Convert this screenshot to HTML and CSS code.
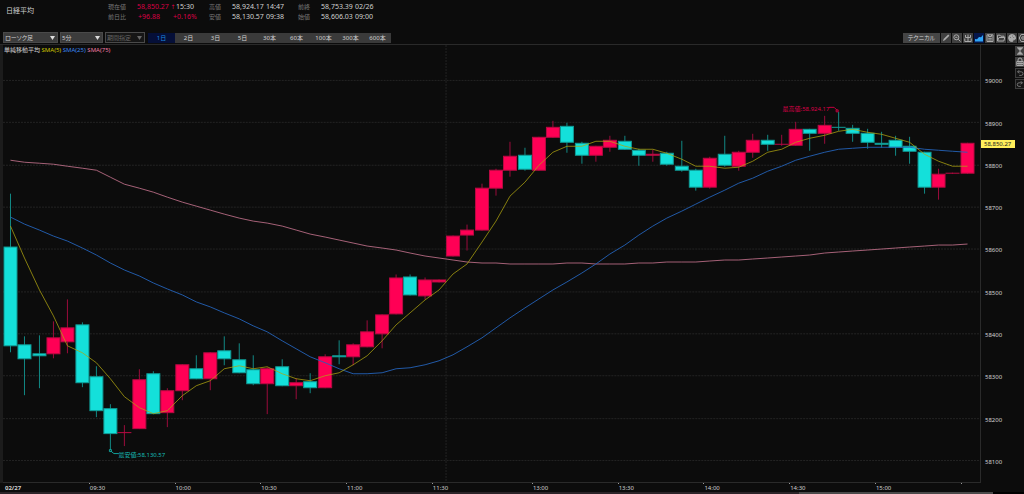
FILE: index.html
```html
<!DOCTYPE html>
<html lang="ja">
<head>
<meta charset="UTF-8">
<meta name="viewport" content="width=device-width, initial-scale=1.0">
<title>日経平均</title>
<link rel="stylesheet" href="styles.css">
</head>
<body>
<header class="quote">
  <h1 class="name">日経平均</h1>
  <dl class="figures">
    <div class="pair current">
      <dt>現在値</dt><dd class="up">58,850.27 <span class="arrow">↑</span></dd><dd>15:30</dd>
      <dt>前日比</dt><dd class="up change">+96.88</dd><dd class="up">+0.16%</dd>
    </div>
    <div class="pair">
      <dt>高値</dt><dd>58,924.17</dd><dd>14:47</dd>
      <dt>安値</dt><dd>58,130.57</dd><dd>09:38</dd>
    </div>
    <div class="pair">
      <dt>前終</dt><dd>58,753.39</dd><dd>02/26</dd>
      <dt>始値</dt><dd>58,606.03</dd><dd>09:00</dd>
    </div>
  </dl>
</header>

<nav class="toolbar">
  <span class="select type"><select aria-label="チャート種類"><option>ローソク足</option></select></span>
  <span class="select span"><select aria-label="足"><option>5分</option></select></span>
  <span class="select range"><select aria-label="期間" disabled><option>期間指定</option></select></span>
  <div class="periods">
    <button class="active">1日</button>
    <button>2日</button>
    <button>3日</button>
    <button>5日</button>
    <button>30本</button>
    <button>60本</button>
    <button>100本</button>
    <button>300本</button>
    <button>600本</button>
  </div>
  <div class="tools">
    <button class="technical">テクニカル</button>
    <button class="icon" aria-label="描画"><svg viewBox="0 0 10 10"><path d="M2 8l.6-1.900 4.600-4.600 1.200 1.200-4.600 4.600z" fill="#aaa" stroke="none"/></svg></button>
    <button class="icon" aria-label="拡大"><svg viewBox="0 0 10 10"><circle cx="4.300" cy="4.300" r="2.500"/><path d="M6.200 6.200L8.500 8.500M3.200 4.300h2.200"/></svg></button>
    <button class="icon" aria-label="比較"><svg viewBox="0 0 10 10"><path d="M5 1.500v7M2.500 2v2.500h5V2M1.800 5.500v3h6.400v-3"/></svg></button>
    <button class="icon active" aria-label="出来高"><svg viewBox="0 0 10 10"><path d="M1 8.500V6l2 .2L5 4l2 .3L9 2v6.500z" fill="#2fa4f5" stroke="none"/></svg></button>
    <button class="icon" aria-label="保存"><svg viewBox="0 0 10 10"><path d="M2 1.800h6v6.700H2zM3.500 1.800v1.700h3V1.800M3.200 5.300h3.600M3.200 7h3.600"/></svg></button>
    <button class="icon" aria-label="開く"><svg viewBox="0 0 10 10"><path d="M1.500 8V2.200h2.500l.8 1h3.200v1.300M1.500 8l1.500-3.500h5.800L7.800 8z"/></svg></button>
    <button class="icon" aria-label="配色"><svg viewBox="0 0 10 10"><path d="M5 1.500a3.500 3.500 0 1 0 .3 7c1 0 .2-1.200.9-1.600.8-.4 2.300.2 2.300-1.900A3.500 3.500 0 0 0 5 1.500z" fill="#aaa"/><path d="M3 4.500h.6M5 3h.6M6.500 4.500h.6" stroke="#555"/></svg></button>
    <button class="icon" aria-label="設定"><svg viewBox="0 0 10 10"><path d="M3.200 1.500h3.600l2 3.500-2 3.500H3.200L1.200 5z"/><circle cx="5" cy="5" r="1.300"/></svg></button>
  </div>
</nav>

<main class="chart">
  <div class="plot">
    <svg id="plot" viewBox="3 45 978 438" preserveAspectRatio="none" role="img" aria-label="5分足チャート">
      <g id="grid" class="grid"></g>
      <g id="candles"></g>
      <polyline id="sma75" class="line sma75"/>
      <polyline id="sma25" class="line sma25"/>
      <polyline id="sma5" class="line sma5"/>
      <path class="leader high" d="M830 107.500h5l3 3M837 110h2v2h-2z"/>
      <path class="leader low" d="M109.500 450.500h2v2h-2zM111 452l3 2.500h5"/>
    </svg>
    <p class="legend">単純移動平均 <span class="sma5">SMA(5)</span> <span class="sma25">SMA(25)</span> <span class="sma75">SMA(75)</span></p>
    <span class="mark high">最高値:58,924.17</span>
    <span class="mark low">最安値:58,130.57</span>
  </div>
  <div class="prices">
    <span></span>
    <span>59000</span>
    <span>58900</span>
    <span>58800</span>
    <span>58700</span>
    <span>58600</span>
    <span>58500</span>
    <span>58400</span>
    <span>58300</span>
    <span>58200</span>
    <span>58100</span>
    <b class="last">58,850.27</b>
  </div>
  <div class="side">
    <button class="icon" aria-label="縦幅"><svg viewBox="0 0 10 10"><path d="M2 1.800h6M2 8.200h6"/><path d="M3.200 2.500h3.600L5 4.600zM3.200 7.500h3.600L5 5.400z" fill="#aaa"/></svg></button>
    <button class="icon" aria-label="固定"><svg viewBox="0 0 10 10"><path d="M3 4.500V3a2 2 0 0 1 4 0v1.500"/><path d="M1.800 4.500h6.400v4H1.800zM4 4.500v4M6 4.500v4M1.800 6.500h6.400"/></svg></button>
    <button class="icon off" aria-label="元に戻す"><svg viewBox="0 0 10 10"><path d="M4 1.500L2 3.500l2 2M2 3.500h4.500a2 2 0 0 1 0 4.500H4"/></svg></button>
    <button class="icon off" aria-label="やり直す"><svg viewBox="0 0 10 10"><path d="M6 1.500l2 2-2 2M8 3.500H3.800a2 2 0 0 0 0 4.500H6"/></svg></button>
  </div>
  <div class="times">
    <b style="grid-column-start: 1">02/27</b>
    <span style="grid-column-start: 7">09:30</span>
    <span style="grid-column-start: 13">10:00</span>
    <span style="grid-column-start: 19">10:30</span>
    <span style="grid-column-start: 25">11:00</span>
    <span style="grid-column-start: 31">11:30</span>
    <span style="grid-column-start: 38">13:00</span>
    <span style="grid-column-start: 44">13:30</span>
    <span style="grid-column-start: 50">14:00</span>
    <span style="grid-column-start: 56">14:30</span>
    <span style="grid-column-start: 62">15:00</span>
    <span style="grid-column-start: 68"></span>
  </div>
</main>
<div class="scrollbar"></div>
<script src="chart.js"></script>
</body>
</html>
```
FILE: styles.css
```css
* {
  box-sizing: border-box;
}
body {
  margin: 0;
  height: 100vh;
  display: flex;
  flex-direction: column;
  overflow: hidden;
  background: #0c0c0c;
  color: #d0d0d0;
  font-family: "Noto Sans", "Noto Sans CJK JP", sans-serif;
  font-size: 6px;
  line-height: 8px;
}
button, select {
  margin: 0;
  padding: 0;
  border: 0;
  font: inherit;
  color: inherit;
}

.quote {
  display: flex;
  height: 31px;
  padding: 2px 6px 0;
}
.name {
  width: 102px;
  margin: 5px 0 0;
  font-size: 7px;
  font-weight: normal;
}
.figures {
  display: flex;
  gap: 16px;
  margin: 0;
  font-size: 7px;
}
.pair {
  display: grid;
  grid-template-columns: 22px 33px 16px;
  grid-auto-rows: 10px;
  column-gap: 1px;
  line-height: 10px;
  white-space: nowrap;
}
.pair.current {
  grid-template-columns: 28px 38px 17px;
}
.pair dt {
  font-size: 6px;
  color: #777;
}
.pair dd {
  margin: 0;
}
.pair .up {
  color: #d80045;
}
.pair .arrow {
  font-family: "DejaVu Sans", sans-serif;
  font-size: 6px;
}
.pair .change {
  padding-left: 1px;
}
.pair .change + .up {
  margin-left: -3px;
}

.toolbar {
  display: flex;
  align-items: center;
  gap: 2px;
  height: 13px;
  padding-left: 3px;
}
.select {
  position: relative;
  height: 11px;
  border: 1px solid #4a4a4a;
  background: #3c3c3c;
}
.select select {
  display: block;
  width: 100%;
  height: 9px;
  padding-left: 1px;
  appearance: none;
  background: transparent;
  font-feature-settings: "palt";
  opacity: 1;
}
.select::after {
  content: "";
  position: absolute;
  right: 2px;
  top: 3px;
  width: 5px;
  height: 4px;
  background: #ddd;
  clip-path: polygon(0 0, 100% 0, 50% 100%);
  pointer-events: none;
}
.type {
  width: 55px;
}
.span {
  width: 43px;
}
.range {
  width: 40px;
  background: #161616;
  color: #666;
}
.range::after {
  background: #666;
}
.periods {
  display: flex;
  margin-left: 1px;
}
.periods button {
  width: 27px;
  height: 10px;
  background: #3a3a3a;
}
.periods .active {
  background: #050f38;
  color: #1c8be0;
}
.tools {
  display: flex;
  gap: 1px;
  width: 121px;
  margin-left: auto;
  overflow: hidden;
}
.technical {
  flex: none;
  width: 37px;
  height: 10px;
  background: #454545;
  font-feature-settings: "palt";
}
.icon {
  flex: none;
  width: 10px;
  height: 10px;
  background: #404040;
}
.icon.active {
  background: #06164a;
}
.icon.off {
  border: 1px solid #3c3c3c;
  background: #151515;
}
.icon svg {
  display: block;
  width: 100%;
  height: 100%;
  fill: none;
  stroke: #aaa;
}
.icon.off svg {
  stroke: #888;
}

.chart {
  flex: 1;
  display: grid;
  grid-template-columns: 1fr 34px 9px;
  grid-template-rows: 1fr 9px;
  min-height: 0;
  border-top: 1px solid #2a2a2a;
}
.plot {
  position: relative;
  min-height: 0;
  border-left: 3px solid #1c1c1c;
}
.plot svg {
  display: block;
  position: absolute;
  width: 100%;
  height: 100%;
  border-right: 1px solid #2a2a2a;
  border-bottom: 1px solid #2a2a2a;
}
.legend {
  position: absolute;
  top: 1px;
  left: 1px;
  margin: 0;
}
.legend .sma5 {
  color: #d0c800;
}
.legend .sma25 {
  color: #3a86f0;
}
.legend .sma75 {
  color: #f07ca6;
}
.mark {
  position: absolute;
  white-space: nowrap;
}
.mark.high {
  top: 13.700%;
  right: 15.500%;
  color: #dc0048;
}
.mark.low {
  top: 92.600%;
  left: 11.800%;
  color: #16bab4;
}

.grid path {
  fill: none;
  stroke: #242424;
  stroke-dasharray: 2 1;
}
.body {
  stroke-width: 1;
}
.body.up {
  fill: #ff0055;
  stroke: #b80a42;
}
.body.down {
  fill: #14e0da;
  stroke: #109c97;
}
.wick.up {
  stroke: #9c0c3c;
}
.wick.down {
  stroke: #128a86;
}
.line {
  fill: none;
}
.line.sma5 {
  stroke: #b0a510;
  stroke-opacity: .75;
}
.line.sma25 {
  stroke: #2462b8;
  stroke-opacity: .9;
}
.line.sma75 {
  stroke: #c0708a;
  stroke-opacity: .85;
}
.leader {
  fill: none;
}
.leader.high {
  stroke: #c4003f;
}
.leader.low {
  stroke: #12a09a;
}

.prices {
  position: relative;
  display: grid;
  grid-template-rows: 14fr repeat(10, 42fr);
  align-items: center;
  padding: 1px 0 0 4px;
}
.last {
  position: absolute;
  top: 21.700%;
  left: 0;
  width: 100%;
  padding-left: 3px;
  background: #ffef5a;
  color: #222;
  font-weight: normal;
}
.side {
  display: flex;
  flex-direction: column;
  gap: 1px;
  padding-top: 1px;
  overflow: hidden;
}
.times {
  display: grid;
  grid-template-columns: repeat(68, 1fr);
  padding: 0 6px 0 3px;
}
.times > * {
  grid-row: 1;
  width: 0;
  padding-top: 1px;
  white-space: nowrap;
}
.times b {
  padding-left: 2px;
}
.times span {
  border-left: 1px solid transparent;
  border-image: linear-gradient(#999 2px, transparent 2px) 1;
}
.scrollbar {
  height: 2px;
  background: linear-gradient(90deg, #2c2428 78%, #4a4a4a 78%, #4a4a4a 97%, #000 97%);
}
```
FILE: chart.js
```js
// [high, body top, body bottom, low, direction] in plot units, one per 5 minutes
const candles = [
  [194, 247, 346, 352, "down"], [337, 345, 359, 395, "down"], [336, 354, 356, 388, "down"],
  [322, 338, 354, 358, "up"], [300, 328, 342, 353, "up"], [323, 325, 383, 387, "down"],
  [367, 377, 411, 417, "down"], [405, 409, 434, 450, "down"], [426, 433, 433, 446, "up"],
  [370, 380, 429, 429, "up"], [372, 374, 414, 414, "down"], [389, 391, 413, 427, "up"],
  [365, 365, 391, 400, "up"], [356, 369, 379, 379, "down"], [353, 353, 379, 390, "up"],
  [337, 351, 359, 365, "down"], [344, 360, 373, 373, "down"], [356, 370, 384, 385, "down"],
  [368, 369, 384, 414, "up"], [360, 367, 386, 386, "down"], [379, 383, 386, 399, "up"],
  [374, 382, 388, 393, "down"], [355, 357, 388, 388, "up"], [341, 356, 357, 364, "down"],
  [344, 345, 357, 365, "up"], [321, 332, 347, 347, "up"], [315, 315, 334, 348, "up"],
  [275, 278, 314, 314, "up"], [275, 277, 295, 295, "down"], [278, 280, 296, 299, "up"],
  [280, 280, 282, 282, "up"], [236, 236, 256, 256, "up"], [225, 230, 235, 250, "up"],
  [184, 188, 230, 230, "up"], [169, 170, 188, 195, "up"], [142, 156, 170, 176, "up"],
  [148, 155, 169, 170, "down"], [137, 137, 170, 170, "up"], [121, 127, 137, 137, "up"],
  [123, 126, 142, 152, "down"], [142, 143, 155, 163, "down"], [146, 146, 155, 161, "up"],
  [136, 140, 147, 151, "up"], [136, 141, 149, 149, "down"], [149, 150, 155, 165, "down"],
  [150, 154, 155, 161, "up"], [152, 153, 164, 165, "down"], [141, 166, 170, 171, "down"],
  [169, 170, 187, 190, "down"], [157, 158, 187, 188, "up"], [136, 154, 165, 166, "down"],
  [151, 152, 166, 170, "up"], [134, 140, 152, 157, "up"], [135, 140, 144, 150, "down"],
  [135, 144, 144, 145, "up"], [122, 129, 145, 145, "up"], [129, 129, 133, 150, "down"],
  [116, 125, 133, 143, "up"], [112, 127, 127, 130, "down"], [125, 128, 133, 141, "down"],
  [129, 133, 142, 148, "down"], [132, 143, 144, 147, "down"], [136, 140, 147, 155, "down"],
  [137, 146, 151, 163, "down"], [152, 152, 187, 193, "down"], [169, 174, 187, 199, "up"],
  [173, 173, 173, 173, "up"], [143, 143, 173, 173, "up"]
];
const averages = {
  sma5: [226, 258, 290, 316, 346, 353, 363, 379, 397, 408, 414, 411, 396, 386, 381, 369, 366, 369,
    367, 374, 379, 381, 376, 373, 365, 356, 341, 325, 313, 300, 290, 274, 264, 242, 221, 196, 182,
    165, 152, 146, 146, 141, 141, 146, 149, 149, 153, 159, 166, 166, 168, 167, 161, 152, 149, 142,
    138, 135, 131, 129, 132, 134, 138, 142, 154, 161, 166, 166],
  sma25: [217, 224, 230, 236, 241, 248, 255, 263, 270, 276, 283, 289, 295, 302, 307, 313, 319, 326,
    332, 341, 349, 357, 363, 369, 374, 374, 373, 369, 368, 365, 361, 355, 347, 338, 328, 318, 308,
    299, 290, 282, 273, 264, 254, 245, 235, 226, 218, 211, 204, 197, 190, 183, 178, 171, 166, 160,
    156, 152, 149, 148, 147, 147, 147, 147, 149, 150, 151, 152],
  sma75: [160, 162, 163, 164, 166, 168, 170, 177, 184, 188, 192, 197, 202, 206, 210, 214, 218, 221,
    223, 226, 230, 234, 237, 240, 243, 246, 248, 250, 253, 256, 258, 260, 262, 263, 263, 264, 264,
    264, 264, 263, 263, 264, 264, 264, 263, 263, 262, 262, 262, 261, 260, 260, 259, 258, 257, 256,
    255, 253, 252, 251, 250, 249, 248, 247, 246, 245, 245, 244]
};

const SLOT = 14.29;
const LEFT = 3.5;
const BODY = 13;
const center = (i) => Math.floor(LEFT + SLOT * (i + 0.5)) + 0.5;

function add(parent, name, attributes) {
  const element = document.createElementNS("http://www.w3.org/2000/svg", name);
  for (const key in attributes) element.setAttribute(key, attributes[key]);
  parent.appendChild(element);
}

const grid = document.getElementById("grid");
for (let i = 0; i < 10; i++) {
  add(grid, "path", { d: `M3 ${Math.round(80 + i * 42.35) + 0.5}H981` });
}
// lunch break
add(grid, "path", { d: "M446.5 45V483" });

const group = document.getElementById("candles");
candles.forEach(([high, top, bottom, low, direction], i) => {
  const x = center(i);
  add(group, "path", { class: `wick ${direction}`, d: `M${x} ${high}V${low + 1}` });
  add(group, "rect", {
    class: `body ${direction}`,
    x: x - BODY / 2,
    y: top + 0.5,
    width: BODY,
    height: Math.max(bottom - top, 0.01)
  });
});

for (const id in averages) {
  const points = averages[id].map((y, i) => `${center(i)},${y + 0.5}`);
  document.getElementById(id).setAttribute("points", points.join(" "));
}
```
